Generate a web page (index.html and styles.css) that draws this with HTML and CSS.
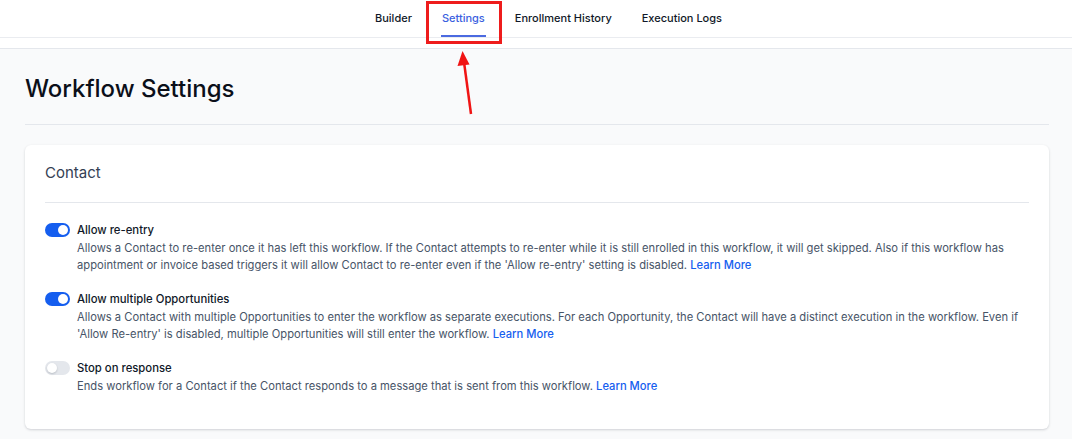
FILE: index.html
```html
<!DOCTYPE html>
<html>
<head>
<meta charset="utf-8">
<link rel="stylesheet" href="styles.css">
</head>
<body>
<div class="page">
  <nav class="tabs">
    <a class="tab">Builder</a>
    <a class="tab active">Settings</a>
    <a class="tab">Enrollment History</a>
    <a class="tab">Execution Logs</a>
  </nav>
  <div class="subbar"></div>
  <main class="content">
    <h1 class="title">Workflow Settings</h1>
    <section class="card">
      <h2 class="card-title">Contact</h2>
      <div class="setting">
        <span class="toggle on"><span class="knob"></span></span>
        <div class="setting-text">
          <div class="setting-name">Allow re-entry</div>
          <p class="setting-desc">Allows a Contact to re-enter once it has left this workflow. If the Contact attempts to re-enter while it is still enrolled in this workflow, it will get skipped. Also if this workflow has appointment or invoice based triggers it will allow Contact to re-enter even if the 'Allow re-entry' setting is disabled. <a class="link">Learn More</a></p>
        </div>
      </div>
      <div class="setting">
        <span class="toggle on"><span class="knob"></span></span>
        <div class="setting-text">
          <div class="setting-name">Allow multiple Opportunities</div>
          <p class="setting-desc">Allows a Contact with multiple Opportunities to enter the workflow as separate executions. For each Opportunity, the Contact will have a distinct execution in the workflow. Even if 'Allow Re-entry' is disabled, multiple Opportunities will still enter the workflow. <a class="link">Learn More</a></p>
        </div>
      </div>
      <div class="setting">
        <span class="toggle"><span class="knob"></span></span>
        <div class="setting-text">
          <div class="setting-name">Stop on response</div>
          <p class="setting-desc">Ends workflow for a Contact if the Contact responds to a message that is sent from this workflow. <a class="link">Learn More</a></p>
        </div>
      </div>
    </section>
  </main>
  <div class="highlight"></div>
  <svg class="arrow" width="30" height="70" viewBox="0 0 30 70">
    <line x1="18" y1="64" x2="11" y2="12" stroke="#f01414" stroke-width="2.5"/>
    <polygon points="9.5,1 4.5,16 16.5,14.5" fill="#f01414"/>
  </svg>
</div>
</body>
</html>
```
FILE: styles.css
```css
* { box-sizing: border-box; }
html, body { margin: 0; padding: 0; }
body {
  font-family: Inter, "Noto Sans", sans-serif;
  background: #f9fafb;
  color: #101828;
  width: 1072px;
  height: 439px;
  overflow: hidden;
}
.page { position: relative; }
.tabs {
  display: flex;
  gap: 28px;
  padding-left: 374px;
  height: 38px;
  background: #fff;
  border-bottom: 1px solid #eaecf0;
}
.tab {
  font-size: 11px;
  font-weight: 500;
  color: #101828;
  line-height: 36px;
  height: 37px;
  padding: 0 1px;
  border-bottom: 2px solid transparent;
}
.tab.active {
  color: #3b5fe0;
  border-bottom-color: #4b6ae0;
}
.subbar {
  height: 11px;
  background: #fff;
  border-bottom: 1px solid #e4e7ec;
}
.content {
  padding: 0 23px 0 25px;
}
.title {
  margin: 0;
  padding: 25px 0 20px;
  font-size: 24px;
  font-weight: 500;
  line-height: 30px;
  border-bottom: 1px solid #e4e7ec;
  color: #0b0f19;
}
.card {
  margin-top: 20px;
  background: #fff;
  border-radius: 6px;
  box-shadow: 0 1px 3px rgba(16,24,40,0.12), 0 1px 2px rgba(16,24,40,0.06);
  padding: 0 20px 34px;
}
.card-title {
  margin: 0;
  padding: 18px 0 19px;
  font-size: 15px;
  font-weight: 400;
  line-height: 20px;
  color: #344054;
  border-bottom: 1px solid #e4e7ec;
  margin-bottom: 19px;
}
.setting {
  display: flex;
  gap: 7px;
  margin-bottom: 17px;
}
.setting:last-child { margin-bottom: 0; }
.toggle {
  flex: none;
  width: 25px;
  height: 14px;
  border-radius: 7px;
  background: #e4e7ec;
  position: relative;
  margin-top: 1px;
}
.toggle.on { background: #155eef; }
.knob {
  position: absolute;
  top: 2px;
  left: 2px;
  width: 10px;
  height: 10px;
  border-radius: 50%;
  background: #fff;
  box-shadow: 0 1px 2px rgba(16,24,40,0.2);
}
.toggle.on .knob { left: 13px; box-shadow: none; }
.setting-name {
  font-size: 11.3px;
  font-weight: 500;
  line-height: 16px;
  color: #101828;
}
.setting-desc {
  margin: 2px 0 0;
  font-size: 11.2px;
  line-height: 17px;
  color: #475467;
}
.link { color: #155eef; font-weight: 500; }
.highlight {
  position: absolute;
  left: 426px;
  top: 1px;
  width: 76px;
  height: 43px;
  border: 3px solid #ee1c1c;
}
.arrow {
  position: absolute;
  left: 453px;
  top: 50px;
}
```
